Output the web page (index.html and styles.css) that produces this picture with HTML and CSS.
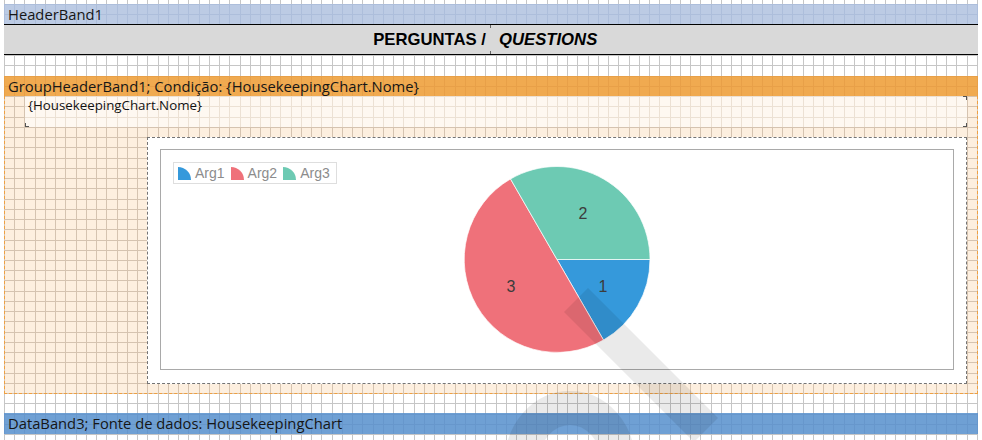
FILE: index.html
```html
<!DOCTYPE html>
<html>
<head>
<meta charset="utf-8">
<link rel="stylesheet" href="styles.css">
</head>
<body>
<div class="sheet grid">
  <div class="band band-header grid">HeaderBand1</div>
  <div class="title-row">
    <div class="cell cell-left">PERGUNTAS /</div>
    <div class="cell cell-right">QUESTIONS</div>
  </div>
  <div class="band band-group grid">GroupHeaderBand1; Condição: {HousekeepingChart.Nome}</div>
  <div class="group-body grid">
    <div class="field">{HousekeepingChart.Nome}</div>
    <div class="chart">
      <div class="chart-inner">
        <div class="legend">
          <span class="leg-item"><svg class="leg-icon" viewBox="0 0 13 13"><path d="M0 13V0A13 13 0 0 1 13 13Z" fill="#3599db"/></svg>Arg1</span>
          <span class="leg-item"><svg class="leg-icon" viewBox="0 0 13 13"><path d="M0 13V0A13 13 0 0 1 13 13Z" fill="#ef717a"/></svg>Arg2</span>
          <span class="leg-item"><svg class="leg-icon" viewBox="0 0 13 13"><path d="M0 13V0A13 13 0 0 1 13 13Z" fill="#6dcab3"/></svg>Arg3</span>
        </div>
        <svg class="pie" width="792" height="219" viewBox="0 0 792 219">
          <path d="M396 109.5 L489 109.5 A93 93 0 0 1 442.5 190.04 Z" fill="#3599db" stroke="#fff" stroke-width="0.7"/>
          <path d="M396 109.5 L442.5 190.04 A93 93 0 0 1 349.5 28.96 Z" fill="#ef717a" stroke="#fff" stroke-width="0.7"/>
          <path d="M396 109.5 L349.5 28.96 A93 93 0 0 1 489 109.5 Z" fill="#6dcab3" stroke="#fff" stroke-width="0.7"/>
          <text x="422" y="69" class="pie-label">2</text>
          <text x="350" y="142" class="pie-label">3</text>
          <text x="442" y="142" class="pie-label">1</text>
        </svg>
      </div>
    </div>
  </div>
  <div class="band band-data grid">DataBand3; Fonte de dados: HousekeepingChart</div>
</div>
<svg class="watermark" width="982" height="440" viewBox="0 0 982 440">
  <g opacity="0.08">
    <path d="M576 300 L706 430" stroke="#000" stroke-width="34" fill="none"/>
    <path d="M522 462 A48 54 0 0 1 618 462" stroke="#000" stroke-width="34" fill="none"/>
  </g>
</svg>
</body>
</html>
```
FILE: styles.css
```css
* { box-sizing: border-box; }
html, body { margin: 0; padding: 0; background: #fff; }
body {
  width: 982px;
  height: 440px;
  overflow: hidden;
  position: relative;
  font-family: "Open Sans", "Liberation Sans", sans-serif;
  color: #161616;
}

.grid {
  --stops: var(--ln) 0 1px, transparent 1px 10px, var(--ln) 10px 11px, transparent 11px 20px, var(--ln) 20px 21px, transparent 21px 31px, var(--ln) 31px 32px, transparent 32px 41px, var(--ln) 41px 42px, transparent 42px 51px, var(--ln) 51px 52px, transparent 52px 61px, var(--ln) 61px 62px, transparent 62px 72px, var(--ln) 72px 73px, transparent 73px 82px, var(--ln) 82px 83px, transparent 83px 92px, var(--ln) 92px 93px, transparent 93px 102px, var(--ln) 102px 103px, transparent 103px 113px, var(--ln) 113px 114px, transparent 114px 123px, var(--ln) 123px 124px, transparent 124px 133px, var(--ln) 133px 134px, transparent 134px 143px, var(--ln) 143px 144px, transparent 144px 154px, var(--ln) 154px 155px, transparent 155px 164px, var(--ln) 164px 165px, transparent 165px 174px, var(--ln) 174px 175px, transparent 175px 184px, var(--ln) 184px 185px, transparent 185px 195px, var(--ln) 195px 196px, transparent 196px 205px, var(--ln) 205px 206px, transparent 206px 215px, var(--ln) 215px 216px, transparent 216px 225px, var(--ln) 225px 226px, transparent 226px 236px, var(--ln) 236px 237px, transparent 237px 246px, var(--ln) 246px 247px, transparent 247px 256px;
  background-color: var(--bg);
  background-image: linear-gradient(to right, var(--stops)), linear-gradient(to bottom, var(--stops));
  background-size: 256px 256px;
  background-position: 4px 4px;
  background-attachment: fixed;
}

.sheet {
  --bg: #ffffff;
  --ln: #c6c6c6;
  margin-left: 4px;
  width: 974px;
  height: 440px;
  padding-top: 4px;
}

.band {
  height: 20px;
  line-height: 20px;
  font-size: 14.75px;
  padding-left: 4px;
  white-space: nowrap;
}
.band-header { --bg: #bccbe4; --ln: #adbedb; }
.band-group { --bg: #f0aa50; --ln: #e8a048; margin-top: 21px; }
.band-data { --bg: #6fa0d4; --ln: #6797cc; margin-top: 19px; height: 21px; line-height: 21px; }

.title-row {
  display: flex;
  height: 31px;
  border-top: 1px solid #000;
  border-bottom: 1px solid #000;
  background: #d9d9d9;
  font-family: "Liberation Sans", Arial, sans-serif;
  font-weight: bold;
  font-size: 16.7px;
  line-height: 29px;
  color: #000;
}
.cell-left {
  width: 486px;
  text-align: right;
  padding-right: 4px;
}
.cell-right {
  flex: 1;
  padding-left: 9px;
  font-style: italic;
  background-image: linear-gradient(#666, #666), linear-gradient(#666, #666);
  background-size: 1px 3px, 1px 3px;
  background-position: left top, left bottom;
  background-repeat: no-repeat;
}

.group-body {
  --bg: #fdefdf;
  --ln: #d5c3b0;
  height: 298px;
  border-left: 1px dashed #f0a040;
  border-right: 1px dashed #f0a040;
  border-bottom: 1px dashed #f0a040;
  padding-left: 20px;
  display: flex;
  flex-direction: column;
  align-items: flex-start;
}

.field {
  --ln: #ece1d4;
  --stops: var(--ln) 0 1px, transparent 1px 10px, var(--ln) 10px 11px, transparent 11px 20px, var(--ln) 20px 21px, transparent 21px 31px, var(--ln) 31px 32px, transparent 32px 41px, var(--ln) 41px 42px, transparent 42px 51px, var(--ln) 51px 52px, transparent 52px 61px, var(--ln) 61px 62px, transparent 62px 72px, var(--ln) 72px 73px, transparent 73px 82px, var(--ln) 82px 83px, transparent 83px 92px, var(--ln) 92px 93px, transparent 93px 102px, var(--ln) 102px 103px, transparent 103px 113px, var(--ln) 113px 114px, transparent 114px 123px, var(--ln) 123px 124px, transparent 124px 133px, var(--ln) 133px 134px, transparent 134px 143px, var(--ln) 143px 144px, transparent 144px 154px, var(--ln) 154px 155px, transparent 155px 164px, var(--ln) 164px 165px, transparent 165px 174px, var(--ln) 174px 175px, transparent 175px 184px, var(--ln) 184px 185px, transparent 185px 195px, var(--ln) 195px 196px, transparent 196px 205px, var(--ln) 205px 206px, transparent 206px 215px, var(--ln) 215px 216px, transparent 216px 225px, var(--ln) 225px 226px, transparent 226px 236px, var(--ln) 236px 237px, transparent 237px 246px, var(--ln) 246px 247px, transparent 247px 256px;
  width: 942px;
  height: 31px;
  flex: none;
  padding: 1px 0 0 3px;
  font-size: 13.3px;
  line-height: 16px;
  color: #111;
  background-color: #fef8f1;
  background-image:
    linear-gradient(#555, #555), linear-gradient(#555, #555),
    linear-gradient(#555, #555), linear-gradient(#555, #555),
    linear-gradient(#555, #555), linear-gradient(#555, #555),
    linear-gradient(to right, var(--stops)), linear-gradient(to bottom, var(--stops));
  background-size: 4px 1px, 1px 4px, 4px 1px, 1px 4px, 4px 1px, 1px 4px, 256px 256px, 256px 256px;
  background-position: right top, right top, right bottom, right bottom, left bottom, left bottom, 4px 4px, 4px 4px;
  background-repeat: no-repeat, no-repeat, no-repeat, no-repeat, no-repeat, no-repeat, repeat, repeat;
  background-attachment: scroll, scroll, scroll, scroll, scroll, scroll, fixed, fixed;
}

.chart {
  flex: none;
  margin-top: 10px;
  margin-left: 122px;
  width: 820px;
  height: 247px;
  border: 1px dashed #747474;
  background: #fff;
  padding: 11px 0 0 12px;
}

.chart-inner {
  position: relative;
  width: 794px;
  height: 221px;
  border: 1px solid #a9a9a9;
  background: #fff;
  padding: 12px 0 0 12px;
}

.legend {
  position: relative;
  z-index: 1;
  display: inline-flex;
  align-items: center;
  gap: 6px;
  height: 22px;
  padding: 0 6px 0 4px;
  border: 1px solid #dedede;
  background: #fff;
  font-family: "Liberation Sans", Arial, sans-serif;
  font-size: 14px;
  color: #8c8c8c;
}
.leg-item {
  display: inline-flex;
  align-items: center;
  gap: 4px;
}
.leg-icon {
  width: 13px;
  height: 13px;
  display: block;
}

.pie {
  position: absolute;
  left: 0;
  top: 0;
}
.pie-label {
  font-family: "Liberation Sans", Arial, sans-serif;
  font-size: 16px;
  fill: #3c3c3c;
  text-anchor: middle;
}

.watermark {
  position: absolute;
  left: 0;
  top: 0;
  pointer-events: none;
}
```
